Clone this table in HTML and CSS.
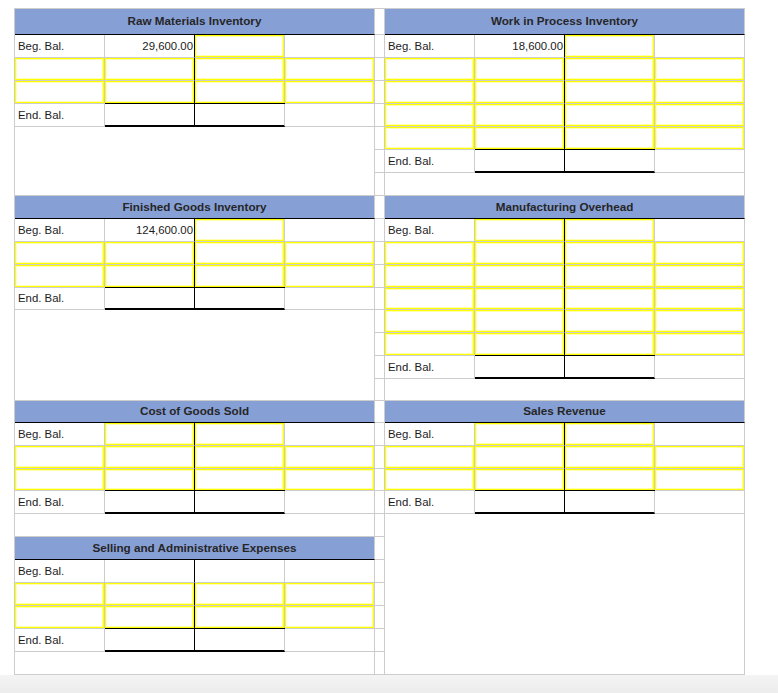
FILE: index.html
```html
<!DOCTYPE html>
<html>
<head>
<meta charset="utf-8">
<title>T-Accounts</title>
<link rel="stylesheet" href="styles.css">
</head>
<body>
<div class="wrap">
<div class="g">
<!-- r1 -->
<div class="c h">Raw Materials Inventory</div><div class="c sp"></div><div class="c h">Work in Process Inventory</div>
<!-- r2 -->
<div class="c lb">Beg. Bal.</div><div class="c v t">29,600.00</div><div class="c"><input class="f"></div><div class="c"></div>
<div class="c sp"></div>
<div class="c lb">Beg. Bal.</div><div class="c v t">18,600.00</div><div class="c"><input class="f"></div><div class="c"></div>
<!-- r3 -->
<div class="c"><input class="f"></div><div class="c t"><input class="f"></div><div class="c"><input class="f"></div><div class="c"><input class="f"></div>
<div class="c sp"></div>
<div class="c"><input class="f"></div><div class="c t"><input class="f"></div><div class="c"><input class="f"></div><div class="c"><input class="f"></div>
<!-- r4 -->
<div class="c"><input class="f"></div><div class="c t"><input class="f"></div><div class="c"><input class="f"></div><div class="c"><input class="f"></div>
<div class="c sp"></div>
<div class="c"><input class="f"></div><div class="c t"><input class="f"></div><div class="c"><input class="f"></div><div class="c"><input class="f"></div>
<!-- r5 -->
<div class="c lb">End. Bal.</div><div class="c e t"></div><div class="c e"></div><div class="c"></div>
<div class="c sp"></div>
<div class="c"><input class="f"></div><div class="c t"><input class="f"></div><div class="c"><input class="f"></div><div class="c"><input class="f"></div>
<!-- r6 -->
<div class="c blank r3"></div>
<div class="c sp"></div>
<div class="c"><input class="f"></div><div class="c t"><input class="f"></div><div class="c"><input class="f"></div><div class="c"><input class="f"></div>
<!-- r7 -->
<div class="c sp"></div>
<div class="c lb">End. Bal.</div><div class="c e t"></div><div class="c e"></div><div class="c"></div>
<!-- r8 -->
<div class="c sp"></div>
<div class="c blank"></div>
<!-- r9 -->
<div class="c h">Finished Goods Inventory</div><div class="c sp"></div><div class="c h">Manufacturing Overhead</div>
<!-- r10 -->
<div class="c lb">Beg. Bal.</div><div class="c v t">124,600.00</div><div class="c"><input class="f"></div><div class="c"></div>
<div class="c sp"></div>
<div class="c lb">Beg. Bal.</div><div class="c t"><input class="f"></div><div class="c"><input class="f"></div><div class="c"></div>
<!-- r11 -->
<div class="c"><input class="f"></div><div class="c t"><input class="f"></div><div class="c"><input class="f"></div><div class="c"><input class="f"></div>
<div class="c sp"></div>
<div class="c"><input class="f"></div><div class="c t"><input class="f"></div><div class="c"><input class="f"></div><div class="c"><input class="f"></div>
<!-- r12 -->
<div class="c"><input class="f"></div><div class="c t"><input class="f"></div><div class="c"><input class="f"></div><div class="c"><input class="f"></div>
<div class="c sp"></div>
<div class="c"><input class="f"></div><div class="c t"><input class="f"></div><div class="c"><input class="f"></div><div class="c"><input class="f"></div>
<!-- r13 -->
<div class="c lb">End. Bal.</div><div class="c e t"></div><div class="c e"></div><div class="c"></div>
<div class="c sp"></div>
<div class="c"><input class="f"></div><div class="c t"><input class="f"></div><div class="c"><input class="f"></div><div class="c"><input class="f"></div>
<!-- r14 -->
<div class="c blank r4"></div>
<div class="c sp"></div>
<div class="c"><input class="f"></div><div class="c t"><input class="f"></div><div class="c"><input class="f"></div><div class="c"><input class="f"></div>
<!-- r15 -->
<div class="c sp"></div>
<div class="c"><input class="f"></div><div class="c t"><input class="f"></div><div class="c"><input class="f"></div><div class="c"><input class="f"></div>
<!-- r16 -->
<div class="c sp"></div>
<div class="c lb">End. Bal.</div><div class="c e t"></div><div class="c e"></div><div class="c"></div>
<!-- r17 -->
<div class="c sp"></div>
<div class="c blank"></div>
<!-- r18 -->
<div class="c h">Cost of Goods Sold</div><div class="c sp"></div><div class="c h">Sales Revenue</div>
<!-- r19 -->
<div class="c lb">Beg. Bal.</div><div class="c t"><input class="f"></div><div class="c"><input class="f"></div><div class="c"></div>
<div class="c sp"></div>
<div class="c lb">Beg. Bal.</div><div class="c t"><input class="f"></div><div class="c"><input class="f"></div><div class="c"></div>
<!-- r20 -->
<div class="c"><input class="f"></div><div class="c t"><input class="f"></div><div class="c"><input class="f"></div><div class="c"><input class="f"></div>
<div class="c sp"></div>
<div class="c"><input class="f"></div><div class="c t"><input class="f"></div><div class="c"><input class="f"></div><div class="c"><input class="f"></div>
<!-- r21 -->
<div class="c"><input class="f"></div><div class="c t"><input class="f"></div><div class="c"><input class="f"></div><div class="c"><input class="f"></div>
<div class="c sp"></div>
<div class="c"><input class="f"></div><div class="c t"><input class="f"></div><div class="c"><input class="f"></div><div class="c"><input class="f"></div>
<!-- r22 -->
<div class="c lb">End. Bal.</div><div class="c e t"></div><div class="c e"></div><div class="c"></div>
<div class="c sp"></div>
<div class="c lb">End. Bal.</div><div class="c e t"></div><div class="c e"></div><div class="c"></div>
<!-- r23 -->
<div class="c blank"></div>
<div class="c sp"></div>
<div class="c blank r7"></div>
<!-- r24 -->
<div class="c h">Selling and Administrative Expenses</div><div class="c sp"></div>
<!-- r25 -->
<div class="c lb">Beg. Bal.</div><div class="c t"></div><div class="c"></div><div class="c"></div>
<div class="c sp"></div>
<!-- r26 -->
<div class="c"><input class="f"></div><div class="c t"><input class="f"></div><div class="c"><input class="f"></div><div class="c"><input class="f"></div>
<div class="c sp"></div>
<!-- r27 -->
<div class="c"><input class="f"></div><div class="c t"><input class="f"></div><div class="c"><input class="f"></div><div class="c"><input class="f"></div>
<div class="c sp"></div>
<!-- r28 -->
<div class="c lb">End. Bal.</div><div class="c e t"></div><div class="c e"></div><div class="c"></div>
<div class="c sp"></div>
<!-- r29 -->
<div class="c blank"></div>
<div class="c sp"></div>
</div>
</div>
<div class="foot"></div>
</body>
</html>
```
FILE: styles.css
```css
html, body {
  margin: 0;
  padding: 0;
  background: #ffffff;
  overflow: hidden;
}

body {
  font-family: "Liberation Sans", Arial, Helvetica, sans-serif;
  font-size: 11.4px;
  color: #1c1c1c;
}

.wrap {
  padding: 8px 0 0 14px;
}

.g {
  display: grid;
  width: max-content;
  grid-template-columns: 90px 90px 90px 90px 10px 90px 90px 90px 90px;
  grid-template-rows:
    26px 23px 23px 23px 23px 23px 23px 23px
    23px 23px 23px 23px 22px 23px 23px 23px 22px
    22px 23px 23px 22px 23px 23px
    23px 23px 23px 23px 23px 23px;
  border-top: 1px solid #cccccc;
  border-left: 1px solid #cccccc;
}

.c {
  box-sizing: border-box;
  border-right: 1px solid #cccccc;
  border-bottom: 1px solid #cccccc;
  background: #ffffff;
  display: flex;
  align-items: center;
  min-width: 0;
  white-space: nowrap;
}

.h {
  grid-column: span 4;
  justify-content: center;
  padding-bottom: 2px;
  background: #86a0d6;
  border-bottom-color: #000000;
  font-weight: bold;
  font-size: 11.7px;
  color: #262626;
}

.sp {
  background: #ffffff;
}

.lb {
  padding-left: 3px;
  padding-bottom: 1px;
}

.v {
  justify-content: flex-end;
  padding-right: 1px;
  padding-bottom: 1px;
}

.t {
  border-right-color: #000000;
}

.e {
  border-bottom: 2px solid #000000;
  box-shadow: 0 -1px 0 #000000;
}

.blank {
  grid-column: span 4;
}

.r3 { grid-row: span 3; }
.r4 { grid-row: span 4; }
.r7 { grid-row: span 7; }

.f {
  display: block;
  box-sizing: border-box;
  width: 100%;
  height: 100%;
  margin: 0;
  padding: 0;
  border: 1px solid #ffff00;
  box-shadow: inset 0 0 0 1px #ffffb0;
  background: #ffffff;
  outline: none;
  font: inherit;
}

.foot {
  height: 18px;
  background: linear-gradient(#f4f4f4, #ececec);
}
```
